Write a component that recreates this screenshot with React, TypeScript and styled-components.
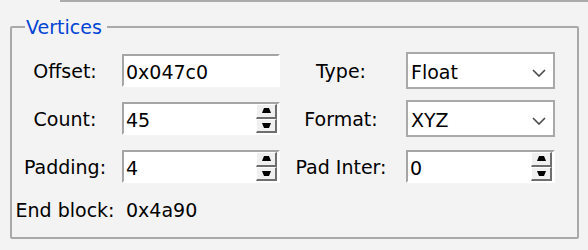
import React from 'react';
import styled, { createGlobalStyle } from 'styled-components';

const GlobalStyle = createGlobalStyle`
  html, body {
    margin: 0;
    padding: 0;
    background: #f3f3f3;
  }
  body {
    font-family: 'DejaVu Sans', Tahoma, sans-serif;
    font-size: 19px;
    color: #000;
  }
`

const Page = styled.div`
  width: 588px;
  height: 250px;
  overflow: hidden;
`

const TopRule = styled.div`
  height: 2px;
  margin-left: 60px;
  background: #ababab;
`

const GroupBox = styled.fieldset`
  margin: 14px 9px 0 10px;
  padding: 0 0 13px 0;
  min-width: 0;
  border: 2px solid #a9a9a9;
  border-radius: 2px;
`

const Legend = styled.legend`
  margin-left: 13px;
  padding: 0 5px 0 1px;
  line-height: 22px;
  color: #0044d4;
`

const FormGrid = styled.div`
  display: grid;
  grid-template-columns: 110px 158px 126px 149px;
  grid-template-rows: 37px 37px 37px 28px;
  row-gap: 11px;
  align-items: center;
  padding-top: 14px;
`

const Label = styled.span`
  text-align: center;
  padding-right: 4px;
  white-space: nowrap;
  line-height: 22px;
`

const Value = styled.span`
  padding-left: 4px;
  line-height: 22px;
`

const TextBox = styled.div`
  box-sizing: border-box;
  height: 33px;
  display: flex;
  align-items: stretch;
  background: #fff;
  border-style: solid;
  border-width: 2px;
  border-color: #a5a5a5 #fff #fff #a5a5a5;
  padding-left: 2px;
`

const BoxText = styled.span`
  flex: 1;
  display: flex;
  align-items: center;
  padding-top: 2px;
  line-height: 22px;
`

const Spinner = styled.div`
  width: 21px;
  margin-right: 1px;
  display: flex;
  flex-direction: column;
`

const SpinButton = styled.div`
  flex: 1;
  box-sizing: border-box;
  display: flex;
  align-items: center;
  justify-content: center;
  background: #f0f0f0;
  border-top: 1px solid #fff;
  border-left: 1px solid #fff;
  border-right: 2px solid #6e6e6e;
  border-bottom: 2px solid #6e6e6e;
`

const ComboBox = styled.div`
  box-sizing: border-box;
  height: 37px;
  display: flex;
  align-items: center;
  justify-content: space-between;
  background: #fff;
  border: 2px solid #a9a9a9;
  padding: 2px 7px 0 3px;
  line-height: 22px;
`

function Arrow({ up }: { up: boolean }) {
  return (
    <svg width="9" height="5" viewBox="0 0 9 5">
      <polygon points={up ? '2,0 7,0 9,5 0,5' : '0,0 9,0 7,5 2,5'} fill="#000" />
    </svg>
  )
}

function Chevron() {
  return (
    <svg width="14" height="8" viewBox="0 0 14 8" style={{ marginTop: 2 }}>
      <polyline points="1,1 7,7 13,1" fill="none" stroke="#4a4a4a" strokeWidth="1.6" />
    </svg>
  )
}

function NumericBox({ value }: { value: string }) {
  return (
    <TextBox>
      <BoxText>{value}</BoxText>
      <Spinner>
        <SpinButton><Arrow up /></SpinButton>
        <SpinButton><Arrow up={false} /></SpinButton>
      </Spinner>
    </TextBox>
  )
}

function Combo({ value }: { value: string }) {
  return (
    <ComboBox>
      <span>{value}</span>
      <Chevron />
    </ComboBox>
  )
}

export default function App() {
  return (
    <Page>
      <GlobalStyle />
      <TopRule />
      <GroupBox>
        <Legend>Vertices</Legend>
        <FormGrid>
          <Label>Offset:</Label>
          <TextBox><BoxText>0x047c0</BoxText></TextBox>
          <Label>Type:</Label>
          <Combo value="Float" />

          <Label>Count:</Label>
          <NumericBox value="45" />
          <Label>Format:</Label>
          <Combo value="XYZ" />

          <Label>Padding:</Label>
          <NumericBox value="4" />
          <Label>Pad Inter:</Label>
          <NumericBox value="0" />

          <Label>End block:</Label>
          <Value>0x4a90</Value>
        </FormGrid>
      </GroupBox>
    </Page>
  )
}
